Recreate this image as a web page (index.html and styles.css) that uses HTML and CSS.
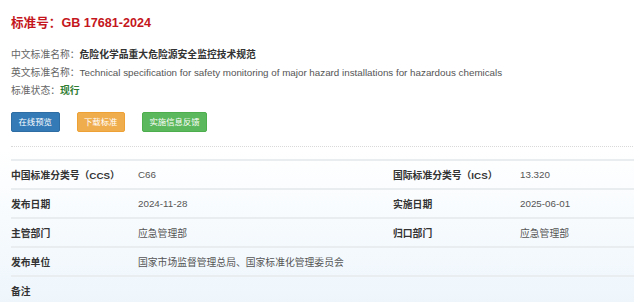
FILE: index.html
```html
<!DOCTYPE html>
<html lang="zh-CN">
<head>
    <meta charset="UTF-8">
    <meta name="viewport" content="width=device-width, initial-scale=1.0">
    <title>GB 17681-2024</title>
    <link rel="stylesheet" href="styles.css">
</head>
<body>
    <div class="page">
        <h1 class="std-title">标准号：GB 17681-2024</h1>

        <div class="info">
            <p><span class="lbl">中文标准名称：</span><b class="cn-name">危险化学品重大危险源安全监控技术规范</b></p>
            <p><span class="lbl">英文标准名称：</span><span class="en-name">Technical specification for safety monitoring of major hazard installations for hazardous chemicals</span></p>
            <p><span class="lbl">标准状态：</span><b class="status">现行</b></p>
        </div>

        <div class="actions">
            <button class="btn btn-blue">在线预览</button>
            <button class="btn btn-orange">下载标准</button>
            <button class="btn btn-green">实施信息反馈</button>
        </div>

        <div class="sep"></div>

        <table class="detail">
            <tr>
                <th>中国标准分类号（CCS）</th>
                <td>C66</td>
                <th>国际标准分类号（ICS）</th>
                <td>13.320</td>
            </tr>
            <tr>
                <th>发布日期</th>
                <td>2024-11-28</td>
                <th>实施日期</th>
                <td>2025-06-01</td>
            </tr>
            <tr>
                <th>主管部门</th>
                <td>应急管理部</td>
                <th>归口部门</th>
                <td>应急管理部</td>
            </tr>
            <tr>
                <th>发布单位</th>
                <td colspan="3">国家市场监督管理总局、国家标准化管理委员会</td>
            </tr>
            <tr>
                <th>备注</th>
                <td colspan="3"></td>
            </tr>
        </table>
    </div>
</body>
</html>
```

FILE: styles.css
```css
html, body { height: 100%; }
body { margin: 0; overflow: hidden; font-family: "Liberation Sans", Arial, "Noto Sans CJK SC", sans-serif; font-size: 9.8px; color: #333; background: linear-gradient(to bottom, #fff 0, #fff 150px, #eef6fc 302px); }
.page { padding: 0 0 0 11px; width: 764px; }

.std-title { margin: 0; padding-top: 16px; height: 22px; line-height: 14px; font-size: 12.6px; color: #c4161c; font-weight: bold; }

.info { margin-top: 8px; }
.info p { margin: 0; height: 18px; line-height: 18px; white-space: nowrap; }
.lbl { color: #666; }
.cn-name { color: #333; }
.en-name { color: #555; }
.status { color: #2e7d32; }

.actions { display: flex; gap: 17px; margin-top: 12px; }
.btn { height: 20px; padding: 0 6.5px; border: 1px solid transparent; border-radius: 2px; font-family: inherit; font-size: 8.4px; color: #fff; line-height: 18px; }
.btn-blue { background: #337ab7; border-color: #2e6da4; }
.btn-orange { background: #f0ad4e; border-color: #eea236; }
.btn-green { background: #5cb85c; border-color: #4cae4c; }

.sep { margin-top: 14px; border-top: 1px dotted #d9d9d9; }

.detail { margin-top: 12px; width: 764px; border-collapse: collapse; table-layout: fixed; font-size: 9.8px; }
.detail tr { border-top: 2px solid #eaedf0; }
.detail th, .detail td { height: 27px; padding: 0; text-align: left; white-space: nowrap; vertical-align: middle; }
.detail th { width: 127px; font-weight: bold; color: #333; }
.detail td { width: 255px; color: #555; }
```
